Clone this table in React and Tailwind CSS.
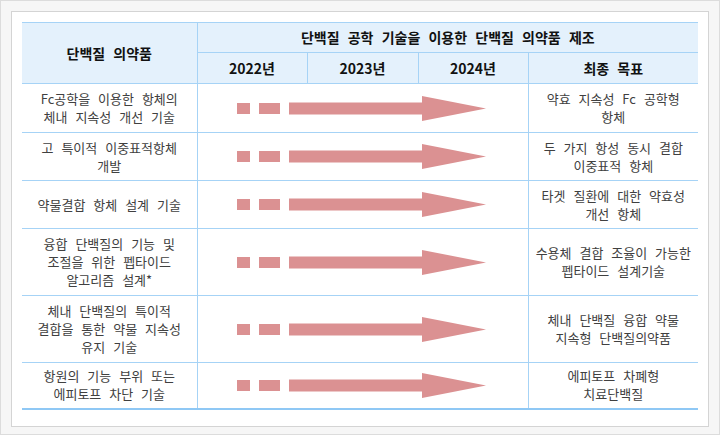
import React from "react";

const rows = [
  {
    name: ["Fc공학을 이용한 항체의", "체내 지속성 개선 기술"],
    goal: ["약효 지속성 Fc 공학형", "항체"],
    h: "h-[49px]",
  },
  {
    name: ["고 특이적 이중표적항체", "개발"],
    goal: ["두 가지 항성 동시 결합", "이중표적 항체"],
    h: "h-[48px]",
  },
  {
    name: ["약물결합 항체 설계 기술"],
    goal: ["타겟 질환에 대한 약효성", "개선 항체"],
    h: "h-[48px]",
  },
  {
    name: ["융합 단백질의 기능 및", "조절을 위한 펩타이드", "알고리즘 설계*"],
    goal: ["수용체 결합 조율이 가능한", "펩타이드 설계기술"],
    h: "h-[67px]",
  },
  {
    name: ["체내 단백질의 특이적", "결합을 통한 약물 지속성", "유지 기술"],
    goal: ["체내 단백질 융합 약물", "지속형 단백질의약품"],
    h: "h-[67px]",
  },
  {
    name: ["항원의 기능 부위 또는", "에피토프 차단 기술"],
    goal: ["에피토프 차폐형", "치료단백질"],
    h: "h-[46px]",
  },
];

function Arrow() {
  return (
    <svg width="250" height="25" viewBox="0 0 250 25" className="block">
      <rect x="0" y="7" width="13" height="11" fill="#db9192" />
      <rect x="22" y="7" width="21" height="11" fill="#db9192" />
      <rect x="52" y="6.5" width="134" height="12" fill="#db9192" />
      <polygon points="185,0 249,12.5 185,25" fill="#db9192" />
    </svg>
  );
}

function Lines({ lines }) {
  return lines.map((l, i) => (
    <div key={i} className="leading-[18px]">
      {l}
    </div>
  ));
}

export default function App() {
  return (
    <div
      className="w-[720px] h-[435px] border border-[#dcdcdc] bg-[#f6f6f6] pl-[10px] pt-[10px]"
      style={{ fontFamily: '"Noto Sans CJK KR", "Noto Sans", sans-serif' }}
    >
      <div className="w-[698px] h-[416px] border border-[#d4d4d4] bg-white p-[10px]">
        <table className="table-fixed border-collapse w-[676px] text-[13px] [word-spacing:5px]">
          <colgroup>
            <col className="w-[175px]" />
            <col className="w-[110px]" />
            <col className="w-[111px]" />
            <col className="w-[110px]" />
            <col className="w-[170px]" />
          </colgroup>
          <thead className="bg-[#e4f1fc] text-[#111] font-bold text-[14px]">
            <tr className="h-[30px] border-t border-[#a6d3f6]">
              <td rowSpan={2} className="text-center border-r border-[#a6d3f6] border-b">
                단백질 의약품
              </td>
              <td colSpan={4} className="text-center border-b border-[#a6d3f6]">
                단백질 공학 기술을 이용한 단백질 의약품 제조
              </td>
            </tr>
            <tr className="h-[31px]">
              <td className="text-center border-r border-b border-[#a6d3f6]">2022년</td>
              <td className="text-center border-r border-b border-[#a6d3f6]">2023년</td>
              <td className="text-center border-r border-b border-[#a6d3f6]">2024년</td>
              <td className="text-center border-b border-[#a6d3f6]">최종 목표</td>
            </tr>
          </thead>
          <tbody className="text-[#404040]">
            {rows.map((r, i) => (
              <tr
                key={i}
                className={`${r.h} ${
                  i === rows.length - 1
                    ? "border-b-2 border-[#8fc8f5]"
                    : "border-b border-[#a6d3f6]"
                }`}
              >
                <td className="text-center align-middle border-r border-[#a6d3f6]">
                  <Lines lines={r.name} />
                </td>
                <td colSpan={3} className="align-middle pl-[39px] border-r border-[#a6d3f6]">
                  <Arrow />
                </td>
                <td className="text-center align-middle">
                  <Lines lines={r.goal} />
                </td>
              </tr>
            ))}
          </tbody>
        </table>
      </div>
    </div>
  );
}
